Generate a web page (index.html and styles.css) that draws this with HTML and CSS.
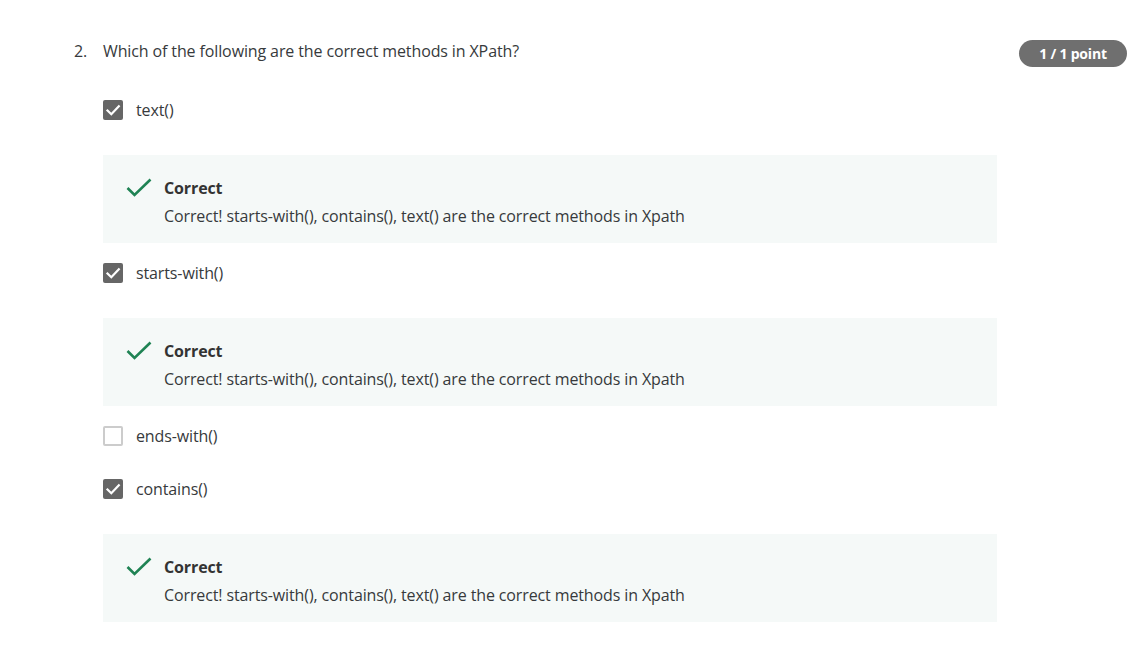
FILE: index.html
```html
<!DOCTYPE html>
<html>
<head>
<meta charset="utf-8">
<link rel="stylesheet" href="styles.css">
</head>
<body>
<div class="question">
  <div class="qhead">
    <span class="qnum">2.</span>
    <span class="qtext">Which of the following are the correct methods in XPath?</span>
    <span class="badge">1 / 1 point</span>
  </div>
  <div class="options">
    <div class="option checked">
      <span class="box"><svg viewBox="0 0 20 20" width="20" height="20"><path d="M4.5 10.5 L8.3 14.2 L15.8 6.2" fill="none" stroke="#fff" stroke-width="2.2" stroke-linecap="square"/></svg></span>
      <span class="label">text()</span>
    </div>
    <div class="feedback">
      <svg class="ok" viewBox="0 0 26 20" width="26" height="20"><path d="M1.5 10 L8.5 17 L24.5 1.5" fill="none" stroke="#1f8354" stroke-width="2.6"/></svg>
      <div class="fbody">
        <div class="fttl">Correct</div>
        <div class="fmsg">Correct! starts-with(), contains(), text() are the correct methods in Xpath</div>
      </div>
    </div>
    <div class="option checked">
      <span class="box"><svg viewBox="0 0 20 20" width="20" height="20"><path d="M4.5 10.5 L8.3 14.2 L15.8 6.2" fill="none" stroke="#fff" stroke-width="2.2" stroke-linecap="square"/></svg></span>
      <span class="label">starts-with()</span>
    </div>
    <div class="feedback">
      <svg class="ok" viewBox="0 0 26 20" width="26" height="20"><path d="M1.5 10 L8.5 17 L24.5 1.5" fill="none" stroke="#1f8354" stroke-width="2.6"/></svg>
      <div class="fbody">
        <div class="fttl">Correct</div>
        <div class="fmsg">Correct! starts-with(), contains(), text() are the correct methods in Xpath</div>
      </div>
    </div>
    <div class="option plain">
      <span class="box empty"></span>
      <span class="label">ends-with()</span>
    </div>
    <div class="option checked">
      <span class="box"><svg viewBox="0 0 20 20" width="20" height="20"><path d="M4.5 10.5 L8.3 14.2 L15.8 6.2" fill="none" stroke="#fff" stroke-width="2.2" stroke-linecap="square"/></svg></span>
      <span class="label">contains()</span>
    </div>
    <div class="feedback">
      <svg class="ok" viewBox="0 0 26 20" width="26" height="20"><path d="M1.5 10 L8.5 17 L24.5 1.5" fill="none" stroke="#1f8354" stroke-width="2.6"/></svg>
      <div class="fbody">
        <div class="fttl">Correct</div>
        <div class="fmsg">Correct! starts-with(), contains(), text() are the correct methods in Xpath</div>
      </div>
    </div>
  </div>
</div>
</body>
</html>
```
FILE: styles.css
```css
* { box-sizing: border-box; }
html, body { margin: 0; padding: 0; background: #fff; }
body {
  font-family: "Open Sans", "Liberation Sans", sans-serif;
  color: #373a3c;
  font-size: 16px;
  letter-spacing: -0.12px;
}
.question {
  padding: 39px 19px 0 74px;
}
.qhead {
  display: flex;
  align-items: center;
  height: 24px;
  margin-bottom: 37px;
}
.qnum { width: 29px; line-height: 24px; }
.qtext { flex: 1; line-height: 24px; }
.badge {
  background: #6f6f6f;
  color: #fff;
  font-weight: 700;
  font-size: 14px;
  letter-spacing: -0.2px;
  height: 27px;
  line-height: 27px;
  width: 108px;
  text-align: center;
  border-radius: 14px;
  margin-top: 4px;
}
.options {
  padding-left: 29px;
  width: 923px;
}
.option {
  display: flex;
  align-items: center;
  height: 20px;
  margin-bottom: 35px;
}
.option.plain { margin-bottom: 33px; }
.box {
  width: 20px;
  height: 20px;
  border-radius: 2px;
  background: #666;
  display: block;
  flex: none;
}
.box svg { display: block; }
.box.empty {
  background: #fff;
  border: 2px solid #ccc;
}
.label {
  margin-left: 13px;
  line-height: 20px;
}
.feedback {
  background: #f5f9f8;
  height: 88px;
  display: flex;
  align-items: flex-start;
  padding: 22px 0 0 23px;
  margin-bottom: 20px;
}
.ok { display: block; margin-top: 1px; flex: none; }
.fbody { margin-left: 12px; }
.fttl {
  font-weight: 700;
  color: #333;
  line-height: 22px;
}
.fmsg {
  line-height: 22px;
  margin-top: 6px;
}
```
